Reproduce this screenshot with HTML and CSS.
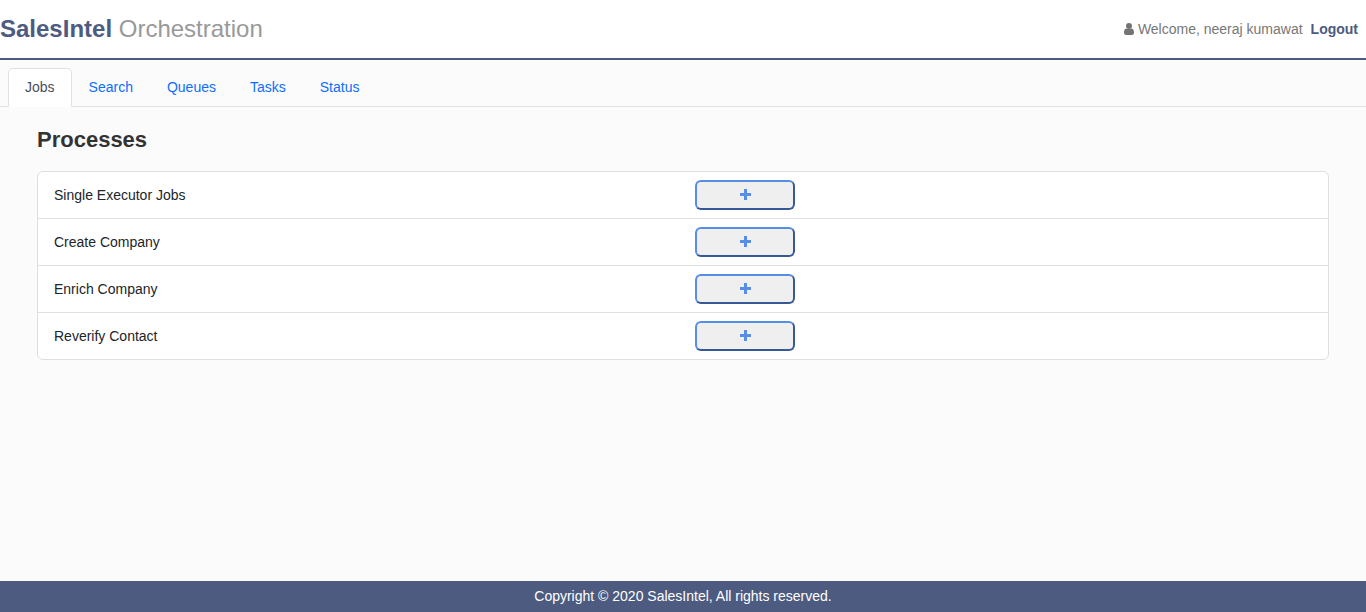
FILE: index.html
```html
<!DOCTYPE html>
<html lang="en">
<head>
<meta charset="utf-8">
<title>SalesIntel Orchestration</title>
<link rel="stylesheet" href="styles.css">
</head>
<body>
<header class="header">
  <h1 class="brand"><strong>SalesIntel</strong> Orchestration</h1>
  <div class="user">
    <svg class="user-icon" viewBox="0 0 10 12" aria-hidden="true"><circle cx="5" cy="3" r="3"/><path d="M2.300 5.400Q5 6.600 7.700 5.400C9.500 5.600 10 7.500 10 9.600C10 11 9.200 12 8 12H2C.8 12 0 11 0 9.600C0 7.500.5 5.600 2.300 5.400z"/></svg>
    <span class="welcome">Welcome, neeraj kumawat</span>
    <a class="logout">Logout</a>
  </div>
</header>
<nav class="tabs">
  <a class="tab active">Jobs</a>
  <a class="tab">Search</a>
  <a class="tab">Queues</a>
  <a class="tab">Tasks</a>
  <a class="tab">Status</a>
</nav>
<main class="main">
  <h2 class="title">Processes</h2>
  <ul class="list">
    <li class="row"><span>Single Executor Jobs</span><button class="add" aria-label="Add"><svg class="plus" viewBox="0 0 11 11"><path d="M4 0h3v4h4v3H7v4H4V7H0V4h4z"/></svg></button></li>
    <li class="row"><span>Create Company</span><button class="add" aria-label="Add"><svg class="plus" viewBox="0 0 11 11"><path d="M4 0h3v4h4v3H7v4H4V7H0V4h4z"/></svg></button></li>
    <li class="row"><span>Enrich Company</span><button class="add" aria-label="Add"><svg class="plus" viewBox="0 0 11 11"><path d="M4 0h3v4h4v3H7v4H4V7H0V4h4z"/></svg></button></li>
    <li class="row"><span>Reverify Contact</span><button class="add" aria-label="Add"><svg class="plus" viewBox="0 0 11 11"><path d="M4 0h3v4h4v3H7v4H4V7H0V4h4z"/></svg></button></li>
  </ul>
</main>
<footer class="footer">Copyright © 2020 SalesIntel, All rights reserved.</footer>
</body>
</html>
```
FILE: styles.css
```css
* { box-sizing: border-box; }
body {
  margin: 0;
  height: 100vh;
  display: flex;
  flex-direction: column;
  background: #fbfbfb;
  color: #212529;
  font: 14px/21px "Liberation Sans", Arial, sans-serif;
}
.header {
  height: 60px;
  display: flex;
  align-items: center;
  justify-content: space-between;
  padding-right: 8px;
  background: #fff;
  border-bottom: 2px solid #4c5b7f;
}
.brand {
  margin: 0;
  font-size: 24px;
  line-height: 36px;
  font-weight: 400;
  color: #999;
}
.brand strong { color: #4c5b7f; }
.user {
  display: flex;
  align-items: center;
  color: #777;
}
.user-icon {
  width: 10px;
  height: 12px;
  margin-right: 4px;
  fill: #737373;
}
.logout {
  margin-left: 8px;
  font-weight: 700;
  color: #4c5b7f;
}
.tabs {
  display: flex;
  padding: 8px 8px 0;
  border-bottom: 1px solid #dee2e6;
}
.tab {
  padding: 8px 16px;
  margin-bottom: -1px;
  border: 1px solid transparent;
  border-radius: 5px 5px 0 0;
  color: #0d6efd;
}
.tab.active {
  background: #fff;
  border-color: #dee2e6 #dee2e6 #fff;
  color: #495057;
}
.main {
  flex: 1;
  padding: 16px 37px 0;
}
.title {
  margin: 0 0 15px;
  font-size: 22px;
  line-height: 33px;
  color: #333;
}
.list {
  margin: 0;
  padding: 0;
  list-style: none;
  background: #fff;
  border: 1px solid #dfdfdf;
  border-radius: 6px;
}
.row {
  display: grid;
  grid-template-columns: 641px 1fr;
  align-items: center;
  padding: 8px 16px;
}
.row + .row { border-top: 1px solid #dfdfdf; }
.add {
  display: flex;
  align-items: center;
  justify-content: center;
  width: 100px;
  height: 30px;
  padding: 0;
  background: #efefef;
  border: 2px solid;
  border-color: #568de5 #355996 #355996 #568de5;
  border-radius: 6px;
}
.plus {
  width: 11px;
  height: 11px;
  margin-bottom: 1px;
  fill: #568de5;
}
.footer {
  height: 31px;
  line-height: 31px;
  text-align: center;
  background: #4c5b7f;
  color: #fff;
}
```
